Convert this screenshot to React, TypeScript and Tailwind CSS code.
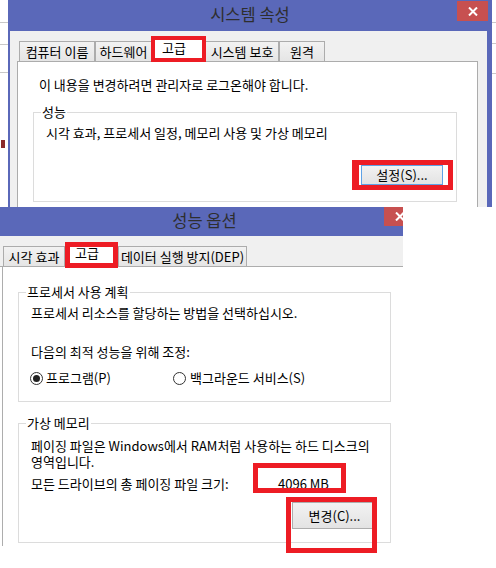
import type { ReactNode } from 'react';

const FONT = "font-['Noto_Sans_CJK_KR','Noto_Sans',sans-serif]";

function CloseX() {
  return (
    <svg width="10" height="9" viewBox="0 0 10 9">
      <path d="M1 0.5 L9 8.5 M9 0.5 L1 8.5" stroke="#fff" strokeWidth="2" />
    </svg>
  );
}

function Tab({ label, w, selected, pl }: { label: string; w: number; selected?: boolean; pl?: number }) {
  if (selected) {
    return (
      <div
        className="relative z-10 -mb-px h-[23px] border border-b-0 border-[#acacac] bg-white text-[13px] leading-[16px]"
        style={{ width: w, paddingLeft: pl }}
      >
        {label}
      </div>
    );
  }
  return (
    <div
      className="h-[20px] border border-b-0 border-[#acacac] bg-linear-to-b from-[#f2f2f2] to-[#e5e5e5] pt-[2px] text-center text-[13px] leading-[16px] whitespace-nowrap"
      style={{ width: w }}
    >
      {label}
    </div>
  );
}

function Group({ label, className, children }: { label: string; className: string; children: ReactNode }) {
  return (
    <div className={`relative border border-[#dcdcdc] ${className}`}>
      <span className="absolute -top-[9px] left-[7px] bg-white px-[1px] text-[13px] leading-[16px]">{label}</span>
      {children}
    </div>
  );
}

function Radio({ checked }: { checked?: boolean }) {
  return (
    <span className="flex h-[13px] w-[13px] items-center justify-center rounded-full border border-[#333] bg-white">
      {checked && <span className="h-[7px] w-[7px] rounded-full bg-[#222]" />}
    </span>
  );
}

function Mark({ className }: { className: string }) {
  return <div className={`absolute z-20 border-[#ed1c24] ${className}`} />;
}

export default function App() {
  return (
    <div className={`relative h-[568px] w-[496px] overflow-hidden bg-white text-black ${FONT}`}>
      {/* desktop bits peeking out behind the dialogs */}
      <div className="absolute left-0 top-[22px] h-px w-[8px] bg-[#c8c8c8]" />
      <div className="absolute left-0 top-[44px] h-px w-[8px] bg-[#c8c8c8]" />
      <div className="absolute left-0 top-[72px] h-px w-[8px] bg-[#c8c8c8]" />
      <div className="absolute left-[1px] top-[140px] h-[8px] w-[4px] bg-[#8b2a2a]" />
      <div className="absolute left-[492px] top-[22px] h-px w-[4px] bg-[#c8c8c8]" />
      <div className="absolute left-[492px] top-[43px] h-px w-[4px] bg-[#c8c8c8]" />
      <div className="absolute left-[492px] top-[73px] h-px w-[4px] bg-[#c8c8c8]" />

      {/* 시스템 속성 */}
      <div className="absolute left-[8px] top-0 flex h-[207px] w-[484px] flex-col bg-[#5a68b9]">
        <div className="relative flex h-[31px] shrink-0 items-center justify-center pb-[2px] text-[16.5px] text-[#2e2e2e]">
          시스템 속성
          <div className="absolute right-[4px] top-[1px] flex h-[20px] w-[31px] items-center justify-center bg-[#c75050]">
            <CloseX />
          </div>
        </div>
        <div className="ml-[2px] mr-[5px] flex flex-1 flex-col bg-[#f0f0f0] pl-[7px] pr-[9px] pt-[10px]">
          <div className="ml-[2px] flex h-[20px] items-end">
            <Tab label="컴퓨터 이름" w={76} />
            <Tab label="하드웨어" w={57} />
            <Tab label="고급" w={53} selected pl={9} />
            <Tab label="시스템 보호" w={74} />
            <Tab label="원격" w={46} />
          </div>
          <div className="flex-1 border border-b-0 border-[#acacac] bg-white pt-[15px] text-[13px] leading-[16px]">
            <div className="pl-[21px]">이 내용을 변경하려면 관리자로 로그온해야 합니다.</div>
            <Group label="성능" className="ml-[15px] mt-[19px] w-[424px] pb-[16px] pt-[12px]">
              <div className="pl-[12px]">시각 효과, 프로세서 일정, 메모리 사용 및 가상 메모리</div>
              <div className="mt-[24px] flex justify-end pr-[13px]">
                <div className="flex h-[20px] w-[82px] items-center justify-center border border-[#5ea2e6] bg-linear-to-b from-[#f2f2f2] to-[#e3e3e3]">
                  설정(S)...
                </div>
              </div>
            </Group>
          </div>
        </div>
      </div>

      {/* 성능 옵션 */}
      <div className="absolute left-0 top-[207px] flex h-[361px] w-[403px] flex-col overflow-hidden bg-white">
        <div className="relative flex h-[29px] shrink-0 items-center justify-center bg-[#5a68b9] pb-[3px] pl-[6px] text-[16.5px] text-[#2e2e2e]">
          성능 옵션
          <div className="absolute left-[384px] top-0 flex h-[19px] w-[31px] items-center justify-center bg-[#c75050]">
            <CloseX />
          </div>
        </div>
        <div className="flex h-[31px] shrink-0 items-end border-b border-[#adadad] bg-[#f0f0f0] pl-[3px]">
          <Tab label="시각 효과" w={62} />
          <Tab label="고급" w={53} selected pl={9} />
          <Tab label="데이터 실행 방지(DEP)" w={129} />
        </div>
        <div className="ml-[2px] h-[279px] border-l border-[#adadad] text-[13px] leading-[16px]">
          <Group label="프로세서 사용 계획" className="ml-[15px] mt-[25px] w-[373px] pb-[15px] pt-[12px]">
            <div className="pl-[12px]">프로세서 리소스를 할당하는 방법을 선택하십시오.</div>
            <div className="mt-[23px] pl-[12px]">다음의 최적 성능을 위해 조정:</div>
            <div className="mt-[10px] flex items-center pl-[11px]">
              <div className="flex w-[143px] items-center gap-[3px]">
                <Radio checked />
                <span>프로그램(P)</span>
              </div>
              <div className="flex items-center gap-[4px]">
                <Radio />
                <span>백그라운드 서비스(S)</span>
              </div>
            </div>
          </Group>
          <Group label="가상 메모리" className="ml-[15px] mt-[21px] w-[373px] pb-[13px] pt-[14px]">
            <div className="pl-[12px] whitespace-nowrap">페이징 파일은 Windows에서 RAM처럼 사용하는 하드 디스크의</div>
            <div className="pl-[12px]">영역입니다.</div>
            <div className="mt-[6px] flex pl-[12px]">
              <span className="w-[247px] shrink-0">모든 드라이브의 총 페이징 파일 크기:</span>
              <span>4096 MB</span>
            </div>
            <div className="mt-[10px] flex justify-end pr-[13px]">
              <div className="flex h-[27px] w-[85px] items-center justify-center border border-[#adadad] bg-linear-to-b from-[#f2f2f2] to-[#e3e3e3]">
                변경(C)...
              </div>
            </div>
          </Group>
        </div>
      </div>

      {/* red annotation boxes */}
      <Mark className="left-[151px] top-[36px] h-[26px] w-[55px] border-4" />
      <Mark className="left-[352px] top-[160px] h-[30px] w-[101px] border-[5px] border-l-[7px]" />
      <Mark className="left-[65px] top-[242px] h-[26px] w-[53px] border-[5px]" />
      <Mark className="left-[253px] top-[463px] h-[30px] w-[93px] border-[5px]" />
      <Mark className="left-[286px] top-[497px] h-[56px] w-[91px] border-[5px]" />
    </div>
  );
}
